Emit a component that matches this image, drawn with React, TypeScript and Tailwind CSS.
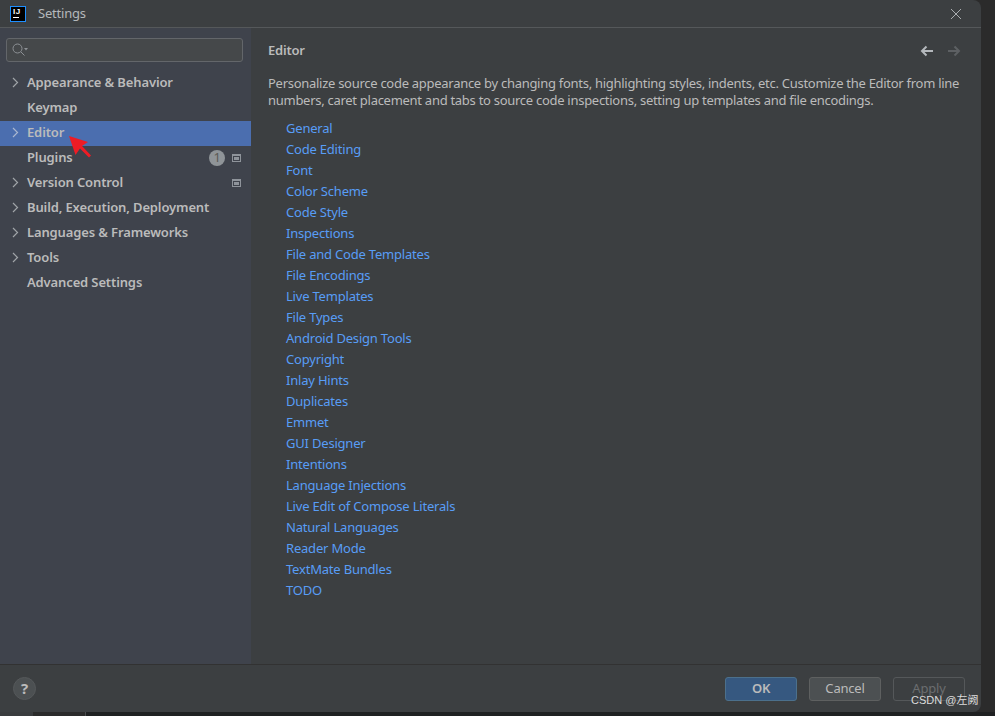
const tree = [
  { label: "Appearance & Behavior", arrow: true },
  { label: "Keymap" },
  { label: "Editor", arrow: true, selected: true },
  { label: "Plugins", badge: "1", project: true },
  { label: "Version Control", arrow: true, project: true },
  { label: "Build, Execution, Deployment", arrow: true },
  { label: "Languages & Frameworks", arrow: true },
  { label: "Tools", arrow: true },
  { label: "Advanced Settings" },
];

const links = [
  "General",
  "Code Editing",
  "Font",
  "Color Scheme",
  "Code Style",
  "Inspections",
  "File and Code Templates",
  "File Encodings",
  "Live Templates",
  "File Types",
  "Android Design Tools",
  "Copyright",
  "Inlay Hints",
  "Duplicates",
  "Emmet",
  "GUI Designer",
  "Intentions",
  "Language Injections",
  "Live Edit of Compose Literals",
  "Natural Languages",
  "Reader Mode",
  "TextMate Bundles",
  "TODO",
];

function ProjectIcon() {
  return (
    <svg width="9" height="8" viewBox="0 0 9 8" className="shrink-0">
      <rect x="0.5" y="0.5" width="8" height="7" fill="none" stroke="#8f949b" />
      <rect x="2" y="3" width="5" height="3" fill="#8f949b" />
      <rect x="1" y="1" width="7" height="1" fill="#8f949b" />
    </svg>
  );
}

function Chevron({ selected }: { selected?: boolean }) {
  return (
    <svg width="7" height="11" viewBox="0 0 7 11">
      <path d="M1 1l4.5 4.5L1 10" fill="none" stroke={selected ? "#a9b7d0" : "#a0a4a8"} strokeWidth="1.2" />
    </svg>
  );
}

function Arrow({ back }: { back?: boolean }) {
  const color = back ? "#b4b8bc" : "#5d6063";
  return (
    <svg width="14" height="12" viewBox="0 0 14 12">
      {back ? (
        <path d="M13 6H2M6.5 1.5L2 6l4.5 4.5" fill="none" stroke={color} strokeWidth="2" />
      ) : (
        <path d="M1 6h11M7.5 1.5L12 6l-4.5 4.5" fill="none" stroke={color} strokeWidth="2" />
      )}
    </svg>
  );
}

export default function App() {
  return (
    <div className="relative flex h-[716px] w-[995px] flex-col overflow-hidden bg-[#2b2b2b] font-['Noto_Sans','Open_Sans',sans-serif] text-[13px] tracking-[-0.2px]">
      <div className="flex h-[712px] w-[981px] shrink-0 flex-col overflow-hidden rounded-r-lg bg-[#3c3f41]">
        {/* title bar */}
        <div className="flex h-[28px] shrink-0 items-center border-b border-[#55585a] pl-[10px] pr-[19px]">
          <div className="flex h-[16px] w-[16px] flex-col border border-[#1f8fff] bg-black pl-[2px] pt-[1px]">
            <span className="font-['Liberation_Sans',sans-serif] text-[8px] font-bold leading-[8px] tracking-[0.5px] text-white">IJ</span>
            <div className="mt-[1px] h-[1px] w-[6px] bg-white" />
          </div>
          <span className="ml-[12px] text-[#b4b8bb]">Settings</span>
          <svg width="12" height="12" viewBox="0 0 12 12" className="ml-auto">
            <path d="M1 1l10 10M11 1L1 11" stroke="#a9adb0" strokeWidth="1" />
          </svg>
        </div>

        <div className="flex min-h-0 flex-1">
          {/* sidebar */}
          <aside className="flex w-[251px] shrink-0 flex-col bg-[#3f434c] pt-[10px]">
            <div className="ml-[6px] mr-[8px] flex h-[24px] items-center rounded-[3px] border border-[#63666a] bg-[#45484a] pl-[5px]">
              <svg width="16" height="14" viewBox="0 0 16 14">
                <circle cx="5.5" cy="5.5" r="4.5" fill="none" stroke="#8d9195" />
                <path d="M9 9l3.5 3.5" stroke="#8d9195" />
                <path d="M12 5h4l-2 2.5z" fill="#8d9195" />
              </svg>
            </div>
            <div className="mt-[9px]">
              {tree.map((item) => (
                <div
                  key={item.label}
                  className={`flex h-[25px] items-center pb-[2px] pr-[10px] ${item.selected ? "bg-[#4b6eaf]" : ""}`}
                >
                  <div className="flex w-[27px] shrink-0 justify-end pr-[8px]">
                    {item.arrow && <Chevron selected={item.selected} />}
                  </div>
                  <span className="font-semibold tracking-[-0.13px] text-[#bbbbbb]">{item.label}</span>
                  {item.badge && (
                    <span className="ml-auto mr-[7px] flex h-[16px] w-[16px] items-center justify-center rounded-full bg-[#8f9498] text-[13px] leading-none text-[#5b5a55]">
                      {item.badge}
                    </span>
                  )}
                  {item.project && (
                    <span className={item.badge ? "" : "ml-auto"}>
                      <ProjectIcon />
                    </span>
                  )}
                </div>
              ))}
            </div>
          </aside>

          {/* content */}
          <main className="min-w-0 flex-1 pl-[17px] pr-[20px] pt-[13px]">
            <div className="flex items-center justify-between">
              <h1 className="text-[13px] font-semibold text-[#bbbbbb]">Editor</h1>
              <div className="flex items-center gap-[13px]">
                <Arrow back />
                <Arrow />
              </div>
            </div>
            <p className="mt-[14px] leading-[17px] tracking-[-0.28px] text-[#bbbbbb]">
              Personalize source code appearance by changing fonts, highlighting styles, indents, etc. Customize the Editor from line numbers, caret placement and tabs to source code inspections, setting up templates and file encodings.
            </p>
            <ul className="mt-[9px] pl-[18px]">
              {links.map((link) => (
                <li key={link} className="h-[21px] leading-[21px] text-[#589df6]">
                  {link}
                </li>
              ))}
            </ul>
          </main>
        </div>

        {/* footer */}
        <div className="flex h-[48px] shrink-0 items-center border-t border-[#323232] pl-[13px] pr-[16px]">
          <div className="flex h-[23px] w-[23px] items-center justify-center rounded-full border border-[#55585a] bg-[#4c5052] text-[15px] font-bold text-[#bbbbbb]">?</div>
          <div className="ml-auto flex gap-[12px]">
            <button className="h-[24px] w-[72px] rounded-[3px] border border-[#4c708c] bg-[#365880] font-semibold text-[#bbbbbb]">OK</button>
            <button className="h-[24px] w-[72px] rounded-[3px] border border-[#5e6060] bg-[#4c5052] text-[#bbbbbb]">Cancel</button>
            <button className="h-[24px] w-[72px] rounded-[3px] border border-[#55585a] text-[#6b6d6f]">Apply</button>
          </div>
        </div>
      </div>

      {/* window behind the dialog */}
      <div className="flex flex-1">
        <div className="w-[33px] bg-[#3a3c3e]" />
        <div className="w-[53px] border-r border-[#4a4c4e] bg-[#2b2b2b]" />
        <div className="flex-1 bg-[#1f2122]" />
      </div>

      {/* red pointer drawn over the screenshot */}
      <svg width="26" height="28" viewBox="0 0 26 28" className="absolute left-[68px] top-[134px]">
        <path d="M1 2L20 8L14 12L23 21.5L21 23.5L12 14.5L7.5 21Z" fill="#ee1c25" />
      </svg>

      {/* watermark */}
      <span className="absolute left-[911px] top-[692px] font-['Liberation_Sans','Noto_Sans_CJK_SC',sans-serif] text-[11px] leading-[16px] tracking-normal text-[#dcdcdc]">
        CSDN @左阙
      </span>
    </div>
  );
}
